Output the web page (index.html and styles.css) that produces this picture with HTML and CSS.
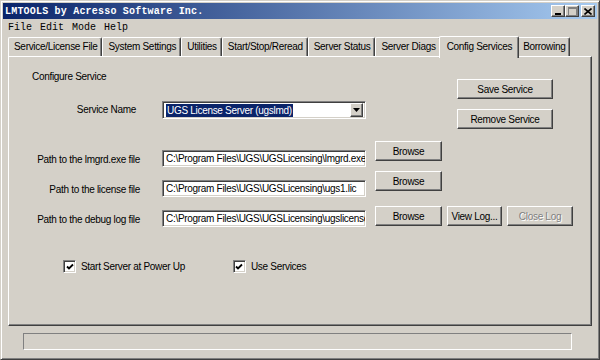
FILE: index.html
```html
<!DOCTYPE html>
<html lang="en">

<head>
    <meta charset="UTF-8">
    <meta name="viewport" content="width=device-width, initial-scale=1.0">
    <title>LMTOOLS</title>
    <link rel="stylesheet" href="styles.css">
</head>

<body>
    <div class="window">
        <div class="titlebar">
            <span class="title">LMTOOLS by Acresso Software Inc.</span>
            <div class="caption-buttons">
                <span class="cap-btn">
                    <svg width="8" height="7" viewBox="0 0 8 7"><rect x="1" y="5" width="6" height="2" fill="#000"/></svg>
                </span>
                <span class="cap-btn">
                    <svg width="9" height="9" viewBox="0 0 9 9"><rect x="0.5" y="0.5" width="8" height="8" fill="none" stroke="#808080"/><rect x="0" y="0" width="9" height="2" fill="#808080"/></svg>
                </span>
                <span class="cap-btn cap-close">
                    <svg width="8" height="7" viewBox="0 0 8 7"><path d="M0.5 0.5 L7.5 6.5 M7.5 0.5 L0.5 6.5" stroke="#000" stroke-width="1.6"/></svg>
                </span>
            </div>
        </div>

        <div class="menubar">
            <span>File</span>
            <span>Edit</span>
            <span>Mode</span>
            <span>Help</span>
        </div>

        <div class="tabs">
            <span class="tab">Service/License File</span>
            <span class="tab">System Settings</span>
            <span class="tab">Utilities</span>
            <span class="tab">Start/Stop/Reread</span>
            <span class="tab">Server Status</span>
            <span class="tab">Server Diags</span>
            <span class="tab active">Config Services</span>
            <span class="tab">Borrowing</span>
        </div>

        <div class="panel">
            <div class="top-section">
                <div class="service-col">
                    <div class="heading">Configure Service</div>
                    <div class="service-row">
                        <span class="field-label service-label">Service Name</span>
                        <div class="combo">
                            <span class="combo-value">UGS License Server (ugslmd)</span>
                            <span class="combo-arrow">
                                <svg width="7" height="4" viewBox="0 0 7 4"><path d="M0 0 H7 L3.5 4 Z" fill="#000"/></svg>
                            </span>
                        </div>
                    </div>
                </div>
                <div class="service-buttons">
                    <button class="btn btn-service">Save Service</button>
                    <button class="btn btn-service">Remove Service</button>
                </div>
            </div>

            <div class="path-row">
                <span class="field-label">Path to the lmgrd.exe file</span>
                <div class="textbox">C:\Program Files\UGS\UGSLicensing\lmgrd.exe</div>
                <button class="btn btn-browse">Browse</button>
            </div>
            <div class="path-row">
                <span class="field-label">Path to the license file</span>
                <div class="textbox">C:\Program Files\UGS\UGSLicensing\ugs1.lic</div>
                <button class="btn btn-browse">Browse</button>
            </div>
            <div class="path-row path-row-log">
                <span class="field-label">Path to the debug log file</span>
                <div class="textbox">C:\Program Files\UGS\UGSLicensing\ugslicense.log</div>
                <button class="btn btn-browse">Browse</button>
                <button class="btn btn-view">View Log...</button>
                <button class="btn btn-close" disabled>Close Log</button>
            </div>

            <div class="options">
                <label class="option">
                    <span class="checkbox">
                        <svg width="8" height="8" viewBox="0 0 8 8"><path d="M1 3.5 L3 5.5 L7 1.5" fill="none" stroke="#000" stroke-width="1.8"/></svg>
                    </span>
                    Start Server at Power Up
                </label>
                <label class="option">
                    <span class="checkbox">
                        <svg width="8" height="8" viewBox="0 0 8 8"><path d="M1 3.5 L3 5.5 L7 1.5" fill="none" stroke="#000" stroke-width="1.8"/></svg>
                    </span>
                    Use Services
                </label>
            </div>
        </div>

        <div class="statusbar"></div>
    </div>
</body>

</html>
```

FILE: styles.css
```css
body {
    margin: 0;
    padding: 0;
    background-color: #d4d0c8;
    font-family: "Liberation Sans", Arial, sans-serif;
    font-size: 10px;
    letter-spacing: -0.3px;
    color: #000;
}

.window {
    width: 600px;
    height: 360px;
    box-sizing: border-box;
    padding: 2px;
    border: 1px solid;
    border-color: #d4d0c8 #404040 #404040 #d4d0c8;
    box-shadow: inset 1px 1px #fff, inset -1px -1px #808080;
    background-color: #d4d0c8;
}

.titlebar {
    height: 16px;
    display: flex;
    align-items: center;
    padding: 0 2px;
    background: linear-gradient(to right, #0a246a, #a6caf0);
}

.title {
    font-family: "Liberation Mono", "Courier New", monospace;
    font-size: 10px;
    font-weight: bold;
    letter-spacing: 0.2px;
    color: #fff;
}

.caption-buttons {
    margin-left: auto;
    display: flex;
}

.cap-btn {
    width: 12px;
    height: 10px;
    display: flex;
    align-items: center;
    justify-content: center;
    background-color: #d4d0c8;
    border: 1px solid;
    border-color: #fff #404040 #404040 #fff;
    box-shadow: inset -1px -1px #808080;
}

.cap-close {
    margin-left: 2px;
}

.menubar {
    height: 16px;
    display: flex;
    align-items: center;
    gap: 8px;
    padding-left: 5px;
    font-family: "Liberation Mono", "Courier New", monospace;
    font-size: 10px;
    letter-spacing: 0;
}

.tabs {
    height: 21px;
    display: flex;
    align-items: flex-end;
    padding-left: 5px;
}

.tab {
    height: 18px;
    line-height: 18px;
    padding: 0 4px 0 5px;
    border-top: 1px solid #fff;
    border-left: 1px solid #fff;
    border-right: 1px solid #404040;
    border-radius: 2px 2px 0 0;
    box-shadow: inset -1px 0 #808080;
    white-space: nowrap;
}

.tab.active {
    position: relative;
    z-index: 1;
    height: 21px;
    line-height: 19px;
    margin: 0 -2px -2px;
    padding: 0 6px 0 7px;
    background-color: #d4d0c8;
}

.panel {
    height: 270px;
    box-sizing: border-box;
    margin: 0 5px;
    border: 1px solid;
    border-color: #fff #404040 #404040 #fff;
    box-shadow: inset -1px -1px #808080;
    padding: 1px;
}

.top-section {
    display: flex;
}

.service-col {
    padding-top: 13px;
}

.heading {
    height: 12px;
    line-height: 12px;
    margin-left: 22px;
}

.service-row {
    display: flex;
    margin-top: 18px;
}

.field-label {
    width: 130px;
    flex-shrink: 0;
    text-align: right;
    white-space: nowrap;
}

.service-label {
    width: 126px;
    padding-right: 4px;
    line-height: 17px;
}

.combo {
    width: 204px;
    height: 18px;
    margin-left: 22px;
    box-sizing: border-box;
    display: flex;
    align-items: center;
    padding: 0 2px 0 3px;
    background-color: #fff;
    border: 1px solid;
    border-color: #808080 #fff #fff #808080;
    box-shadow: inset 1px 1px #404040, inset -1px -1px #d4d0c8;
}

.combo-value {
    line-height: 13px;
    padding: 0 1px;
    background-color: #0a246a;
    color: #fff;
    white-space: nowrap;
}

.combo-arrow {
    margin-left: auto;
    width: 11px;
    height: 12px;
    display: flex;
    align-items: center;
    justify-content: center;
    background-color: #d4d0c8;
    border: 1px solid;
    border-color: #fff #404040 #404040 #fff;
    box-shadow: inset -1px -1px #808080;
}

.service-buttons {
    margin-left: auto;
    margin-right: 37px;
    padding-top: 21px;
    display: flex;
    flex-direction: column;
    gap: 10px;
}

.btn {
    height: 20px;
    box-sizing: border-box;
    padding: 0;
    font-family: inherit;
    font-size: 10px;
    letter-spacing: -0.3px;
    color: #000;
    background-color: #d4d0c8;
    border: 1px solid;
    border-color: #fff #404040 #404040 #fff;
    box-shadow: inset -1px -1px #808080;
}

.btn-service {
    width: 96px;
}

.btn[disabled] {
    color: #808080;
    text-shadow: 1px 1px #fff;
}

.path-row {
    height: 30px;
    display: flex;
    align-items: flex-start;
}

.top-section + .path-row {
    margin-top: 12px;
}

.path-row .field-label {
    margin-top: 10px;
    line-height: 17px;
}

.textbox {
    width: 204px;
    height: 17px;
    margin-top: 9px;
    margin-left: 22px;
    box-sizing: border-box;
    padding: 0 3px;
    line-height: 15px;
    overflow: hidden;
    white-space: nowrap;
    background-color: #fff;
    border: 1px solid;
    border-color: #808080 #fff #fff #808080;
    box-shadow: inset 1px 1px #404040, inset -1px -1px #d4d0c8;
}

.btn-browse {
    width: 67px;
    margin-left: 9px;
}

.btn-view {
    width: 55px;
    margin-left: 5px;
}

.btn-close {
    width: 66px;
    margin-left: 5px;
}

.path-row-log .btn {
    margin-top: 5px;
}

.options {
    display: flex;
    gap: 48px;
    margin-top: 29px;
    padding-left: 53px;
}

.option {
    display: flex;
    align-items: center;
    gap: 5px;
    line-height: 12px;
}

.checkbox {
    width: 9px;
    height: 9px;
    display: flex;
    align-items: center;
    justify-content: center;
    background-color: #fff;
    border: 1px solid;
    border-color: #808080 #fff #fff #808080;
    box-shadow: inset 1px 1px #404040, inset -1px -1px #d4d0c8;
    padding: 1px;
}

.statusbar {
    width: 549px;
    height: 17px;
    box-sizing: border-box;
    margin: 7px 0 0 20px;
    border: 1px solid;
    border-color: #808080 #fff #fff #808080;
}
```
